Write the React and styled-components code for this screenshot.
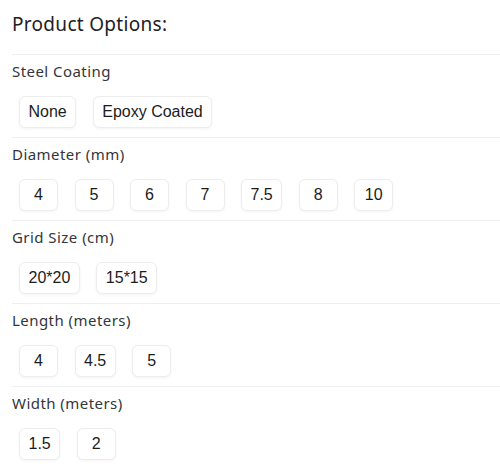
import React, { useState } from "react";
import styled, { createGlobalStyle } from "styled-components";

const GlobalStyle = createGlobalStyle`
  html, body {
    margin: 0;
    padding: 0;
    background: #ffffff;
  }
  body {
    font-family: "Noto Sans", "Liberation Sans", sans-serif;
    overflow: hidden;
  }
`;

const options = [
  { label: "Steel Coating", values: ["None", "Epoxy Coated"] },
  { label: "Diameter (mm)", values: ["4", "5", "6", "7", "7.5", "8", "10"] },
  { label: "Grid Size (cm)", values: ["20*20", "15*15"] },
  { label: "Length (meters)", values: ["4", "4.5", "5"] },
  { label: "Width (meters)", values: ["1.5", "2"] },
];

const App = () => {
  const [selected, setSelected] = useState({});

  return (
    <Wrapper>
      <GlobalStyle />
      <Title>Product Options:</Title>
      {options.map((group) => (
        <Section key={group.label}>
          <Label>{group.label}</Label>
          <Choices>
            {group.values.map((value) => (
              <Choice
                key={value}
                $active={selected[group.label] === value}
                onClick={() =>
                  setSelected({ ...selected, [group.label]: value })
                }
              >
                {value}
              </Choice>
            ))}
          </Choices>
        </Section>
      ))}
    </Wrapper>
  );
};

export default App;

const Wrapper = styled.div`
  padding: 8px 0 0 12px;
  width: 488px;
  display: flex;
  flex-direction: column;
`;

const Title = styled.h2`
  margin: 0;
  height: 46px;
  line-height: 32px;
  font-size: 19px;
  font-weight: 400;
  letter-spacing: 0.3px;
  color: #1f2024;
`;

const Section = styled.div`
  border-top: 1px solid #efefef;
  padding: 5px 0 9px;
  display: flex;
  flex-direction: column;
  gap: 14px;
`;

const Label = styled.div`
  line-height: 22px;
  font-size: 15px;
  letter-spacing: 0.45px;
  color: #33363c;
`;

const Choices = styled.div`
  display: flex;
  gap: 16.5px;
  padding-left: 7px;
`;

const Choice = styled.button`
  box-sizing: border-box;
  height: 32px;
  min-width: 39px;
  padding: 0 8.5px;
  border: 1px solid ${(p) => (p.$active ? "#2d7be5" : "#ededed")};
  border-radius: 6px;
  background: #ffffff;
  box-shadow: 0 1px 3px rgba(0, 0, 0, 0.05);
  font-family: "Liberation Sans", Arial, sans-serif;
  font-size: 16px;
  color: #1c1c1c;
  cursor: pointer;
`;
